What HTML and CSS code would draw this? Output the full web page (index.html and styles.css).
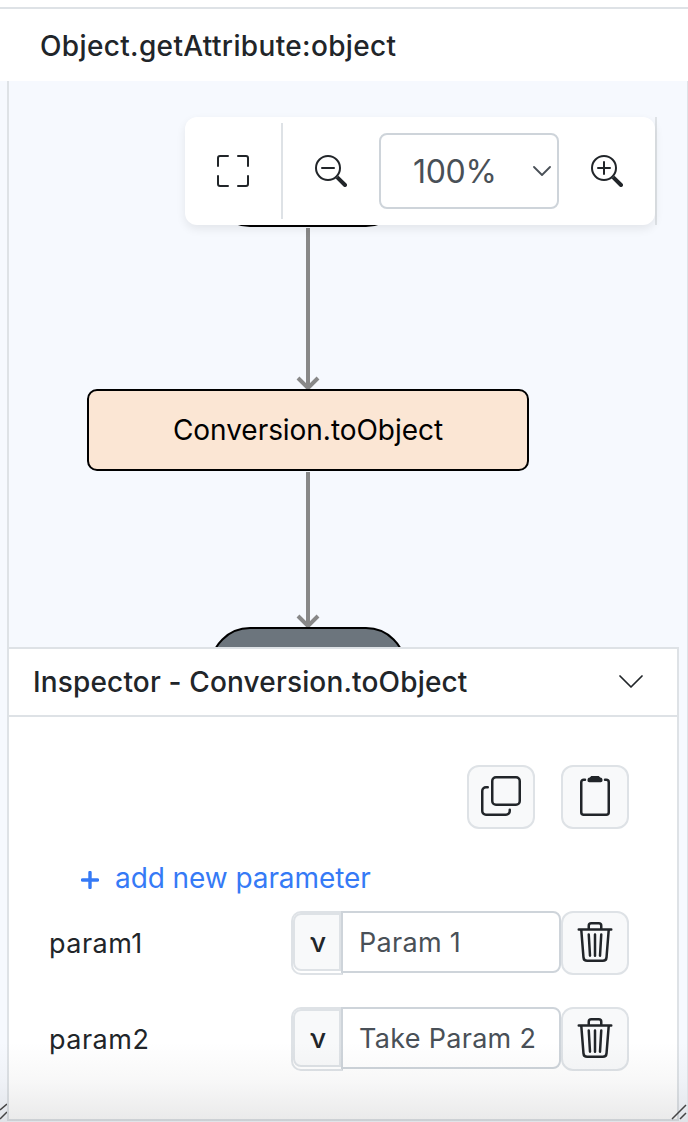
FILE: index.html
```html
<!DOCTYPE html>
<html lang="en">
<head>
<meta charset="utf-8">
<title>Object.getAttribute:object</title>
<link rel="stylesheet" href="styles.css">
</head>
<body>
<svg class="defs" aria-hidden="true">
  <symbol id="zoom-base" viewBox="0 0 16 16">
    <circle cx="6.5" cy="6.5" r="6" fill="none" stroke="currentColor"/>
    <path d="M10.344 11.742c.03.04.062.078.098.115l3.85 3.85a1 1 0 0 0 1.415-1.414l-3.85-3.85a1.007 1.007 0 0 0-.115-.1 6.538 6.538 0 0 1-1.398 1.4z"/>
  </symbol>
  <symbol id="trash" viewBox="0 0 16 16">
    <path d="M6.5 1h3a.5.5 0 0 1 .5.5v1H6v-1a.5.5 0 0 1 .5-.5M11 2.5v-1A1.5 1.5 0 0 0 9.5 0h-3A1.5 1.5 0 0 0 5 1.5v1H1.5a.5.5 0 0 0 0 1h.538l.853 10.66A2 2 0 0 0 4.885 16h6.23a2 2 0 0 0 1.994-1.84l.853-10.66h.538a.5.5 0 0 0 0-1zm1.958 1-.846 10.58a1 1 0 0 1-.997.92h-6.23a1 1 0 0 1-.997-.92L3.042 3.5zm-7.487 1a.5.5 0 0 1 .528.47l.5 8.5a.5.5 0 0 1-.998.06L5 5.03a.5.5 0 0 1 .47-.53Zm5.058 0a.5.5 0 0 1 .47.53l-.5 8.5a.5.5 0 1 1-.998-.06l.5-8.5a.5.5 0 0 1 .528-.47M8 4.5a.5.5 0 0 1 .5.5v8.5a.5.5 0 0 1-1 0V5a.5.5 0 0 1 .5-.5"/>
  </symbol>
</svg>
<main class="app">
  <header class="titlebar"><h1 class="title">Object.getAttribute:object</h1></header>
  <section class="editor">
    <div class="canvas">
      <div class="node node-end node-start"></div>
      <svg class="edge edge-first" width="24" height="162" viewBox="0 0 24 162"><path d="M12 0V158M2 150L12 160L22 150"/></svg>
      <div class="node node-call"><span class="node-label">Conversion.toObject</span></div>
      <svg class="edge edge-second" width="24" height="156" viewBox="0 0 24 156"><path d="M12 0V152M2 144L12 154L22 144"/></svg>
      <div class="node node-end node-return"></div>
      <div class="toolbar-edge">
      <div class="toolbar">
        <button class="tool tool-full" aria-label="Fullscreen"><svg class="icon" viewBox="0 0 16 16"><path d="M1.5 1a.5.5 0 0 0-.5.5v4a.5.5 0 0 1-1 0v-4A1.5 1.5 0 0 1 1.5 0h4a.5.5 0 0 1 0 1h-4zM10 .5a.5.5 0 0 1 .5-.5h4A1.5 1.5 0 0 1 16 1.5v4a.5.5 0 0 1-1 0v-4a.5.5 0 0 0-.5-.5h-4a.5.5 0 0 1-.5-.5zM.5 10a.5.5 0 0 1 .5.5v4a.5.5 0 0 0 .5.5h4a.5.5 0 0 1 0 1h-4A1.5 1.5 0 0 1 0 14.5v-4a.5.5 0 0 1 .5-.5zm15 0a.5.5 0 0 1 .5.5v4a1.5 1.5 0 0 1-1.5 1.5h-4a.5.5 0 0 1 0-1h4a.5.5 0 0 0 .5-.5v-4a.5.5 0 0 1 .5-.5z"/></svg></button>
        <button class="tool" aria-label="Zoom out"><svg class="icon" viewBox="0 0 16 16"><use href="#zoom-base"/><path class="stroke" d="M3.5 6.5h6"/></svg></button>
        <div class="zoom-select"><span class="zoom-value">100%</span><svg class="caret" viewBox="0 0 18 10"><path class="stroke" d="M1 1l8 8 8-8"/></svg></div>
        <button class="tool" aria-label="Zoom in"><svg class="icon" viewBox="0 0 16 16"><use href="#zoom-base"/><path class="stroke" d="M3.5 6.5h6M6.5 3.5v6"/></svg></button>
      </div>
      </div>
    </div>
    <section class="inspector">
      <header class="inspector-head">
        <h2 class="inspector-title">Inspector - Conversion.toObject</h2>
        <svg class="collapse" viewBox="0 0 24 14"><path class="stroke" d="M1 1l11 11L23 1"/></svg>
      </header>
      <div class="inspector-body">
        <div class="actions">
          <button class="square" aria-label="Copy"><svg class="icon-lg" viewBox="0 0 16 16"><path class="stroke" d="M2.700 4.500H2A1.500 1.500 0 0 0 .5 6v8A1.500 1.500 0 0 0 2 15.500h8a1.500 1.500 0 0 0 1.500-1.500v-.5"/><rect class="stroke" x="4.500" y=".5" width="11" height="11" rx="1.500"/></svg></button>
          <button class="square" aria-label="Paste"><svg class="icon-lg" viewBox="0 0 16 16"><path class="stroke" d="M4 1.500h-.5a1 1 0 0 0-1 1V14.500a1 1 0 0 0 1 1h9a1 1 0 0 0 1-1V2.500a1 1 0 0 0-1-1H12"/><path d="M6.500 0h3l.6.6c.6.1.9.4.9 1v.2c0 .4-.3.700-.7.700H5.700c-.4 0-.7-.3-.7-.7v-.2c0-.6.3-.9.9-1z"/></svg></button>
        </div>
        <a class="add"><svg class="plus" viewBox="0 0 18 18"><path d="M9 1.500v15M1.500 9h15"/></svg><span class="add-label">add new parameter</span></a>
        <div class="param">
          <span class="param-name">param1</span>
          <div class="var-wrap"><button class="var">ν</button></div>
          <div class="field"><span class="field-one">Param 1</span></div>
          <button class="square" aria-label="Delete"><svg class="icon-lg"><use href="#trash"/></svg></button>
        </div>
        <div class="param">
          <span class="param-name">param2</span>
          <div class="var-wrap"><button class="var">ν</button></div>
          <div class="field"><span class="field-two">Take Param 2</span></div>
          <button class="square" aria-label="Delete"><svg class="icon-lg"><use href="#trash"/></svg></button>
        </div>
      </div>
    </section>
    <div class="fade"></div>
    <svg class="grip grip-left" width="7" height="17" viewBox="0 0 7 17"><path d="M0 7L7 1M0 16L7 9"/></svg>
    <svg class="grip grip-right" width="16" height="16" viewBox="0 0 16 16"><path d="M1 15L15 1M9 15L15 9"/></svg>
  </section>
</main>
</body>
</html>
```

FILE: styles.css
```css
* { box-sizing: border-box; }
body { margin: 0; background: #fff; color: #212529; font: 28px/40px Inter, "Liberation Sans", sans-serif; }
button { margin: 0; padding: 0; border: 0; background: none; color: inherit; font: inherit; }
svg { display: block; fill: currentColor; flex: none; }
.defs { position: absolute; width: 0; height: 0; }
.stroke { fill: none; stroke: currentColor; stroke-linecap: round; stroke-linejoin: round; }

.app { width: 688px; height: 1122px; overflow: hidden; display: flex; flex-direction: column; }
.titlebar { height: 74px; margin-top: 7px; border-top: 2px solid #dee2e6; padding: 17px 0 0 40px; }
.title { margin: 0; font-size: 28px; line-height: 40px; font-weight: 500; letter-spacing: .35px; white-space: nowrap; }

.editor { position: relative; flex: 1; background: #f6f9fe; border-right: 1px solid #dee2e6; padding-left: 7px; display: flex; flex-direction: column; }
.canvas { position: relative; height: 566px; border-left: 2px solid #dee2e6; overflow: hidden; }
.node { position: absolute; border: 2px solid #000; }
.node-end { left: 201px; width: 196px; height: 82px; border-radius: 40px; background: #6c757d; }
.node-start { top: 64px; }
.node-return { top: 546px; }
.node-call { left: 78px; top: 308px; width: 442px; height: 82px; border-radius: 10px; background: #fbe6d4; color: #000; display: flex; align-items: center; justify-content: center; }
.node-label { letter-spacing: -.04px; }
.edge { position: absolute; left: 287px; fill: none; stroke: #888; stroke-width: 4; }
.edge-first { top: 147px; }
.edge-second { top: 391px; }

.toolbar-edge { position: absolute; left: 176px; top: 36px; width: 472px; border-right: 2px solid #dee2e6; }
.toolbar { height: 108px; display: flex; align-items: center; background: #fff; border-radius: 12px; box-shadow: 0 4px 10px rgba(0, 0, 0, .08); }
.tool { width: 96px; height: 96px; display: grid; place-items: center; }
.tool-full { width: 98px; border-right: 2px solid #dee2e6; }
.icon { width: 32px; height: 32px; }
.zoom-select { width: 180px; height: 76px; border: 2px solid #ced4da; border-radius: 8px; display: flex; align-items: center; justify-content: space-between; padding: 0 6px 0 32px; color: #495057; font-size: 32px; }
.zoom-value { padding-top: 2px; letter-spacing: -.3px; }
.caret { width: 18px; height: 10px; stroke-width: 1.8; }

.inspector { width: 672px; height: 474px; border: 2px solid #dee2e6; background: #fff; }
.inspector-head { height: 68px; border-bottom: 2px solid #dee2e6; padding: 0 34px 0 24px; display: flex; align-items: center; justify-content: space-between; }
.inspector-title { margin: 0; font-size: 28px; font-weight: 500; letter-spacing: .16px; white-space: nowrap; }
.collapse { width: 24px; height: 14px; stroke-width: 1.7; }
.inspector-body { padding: 48px 48px 0 40px; }
.actions { display: flex; justify-content: flex-end; gap: 26px; height: 64px; }
.square { width: 68px; height: 64px; padding-bottom: 2px; border: 2px solid #dee2e6; border-radius: 12px; background: #f8f9fa; display: grid; place-items: center; flex: none; }
.icon-lg { width: 40px; height: 40px; }
.add { display: flex; align-items: center; gap: 16px; height: 40px; margin: 29px 0 13px 32px; color: #357af6; white-space: nowrap; letter-spacing: -.08px; }
.plus { width: 18px; height: 18px; fill: none; stroke: currentColor; stroke-width: 3.4; stroke-linecap: round; margin-top: 3px; }
.param { display: flex; height: 64px; margin-bottom: 32px; }
.param-name { width: 242px; line-height: 66px; font-size: 27px; letter-spacing: .5px; }
.var-wrap { width: 52px; height: 64px; border: 2px solid #dee2e6; border-right-color: #ced4da; border-radius: 10px 0 0 10px; }
.var { width: 48px; height: 58px; border: 2px solid #dee2e6; border-radius: 8px 0 0 8px; background: #f8f9fa; font-size: 27px; font-weight: 500; line-height: 56px; padding-left: 2px; }
.field { width: 220px; height: 62px; margin-left: -2px; border: 2px solid #ced4da; border-radius: 0 8px 8px 0; padding-left: 16px; line-height: 60px; font-size: 27px; letter-spacing: .3px; color: #495057; white-space: nowrap; background: #fff; }

.fade { position: absolute; left: 0; right: 0; bottom: 0; height: 80px; background: linear-gradient(rgba(40, 40, 45, 0), rgba(40, 40, 45, .035) 50%, rgba(40, 40, 45, .1)); pointer-events: none; }
.grip { position: absolute; bottom: 2px; fill: none; stroke: #444; stroke-width: 1.5; }
.grip-left { left: 0; }
.grip-right { right: 0; }
```
